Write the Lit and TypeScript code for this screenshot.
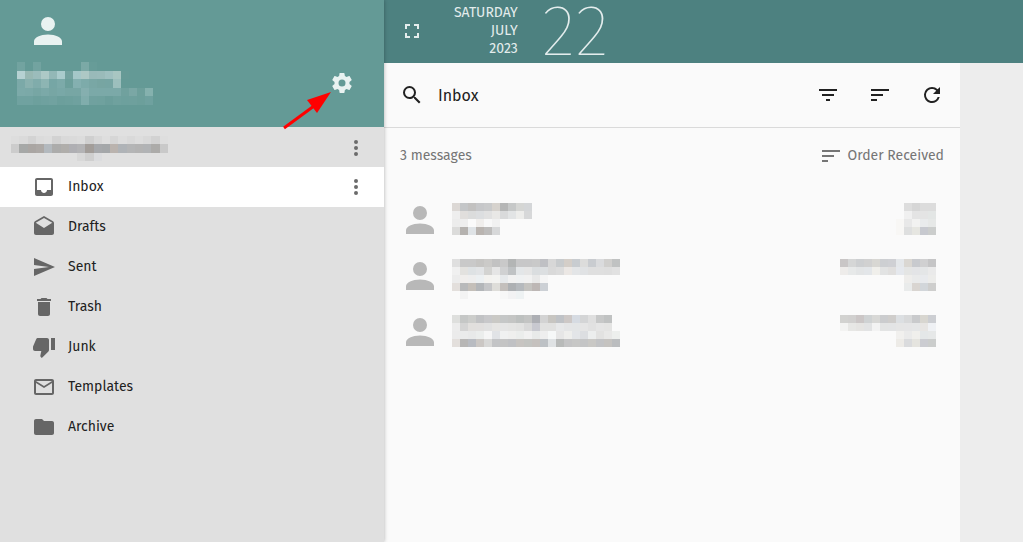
import { LitElement, html, svg, css } from "lit";
import { customElement, property, state } from "lit/decorators.js";

const ICONS: Record<string, string> = {
  account:
    "M12 4a4 4 0 1 1 0 8 4 4 0 0 1 0-8zM12 14c4.42 0 8 1.79 8 4v2H4v-2c0-2.21 3.58-4 8-4z",
  settings:
    "M12 15.5A3.5 3.5 0 0 1 8.5 12 3.5 3.5 0 0 1 12 8.5a3.5 3.5 0 0 1 3.5 3.5 3.5 3.5 0 0 1-3.5 3.5m7.43-2.53c.04-.32.07-.64.07-.97s-.03-.66-.07-1l2.11-1.63c.19-.15.24-.42.12-.64l-2-3.46c-.12-.22-.39-.31-.61-.22l-2.49 1c-.52-.39-1.06-.73-1.69-.98l-.37-2.65A.506.506 0 0 0 14 2h-4c-.25 0-.46.18-.5.42l-.37 2.65c-.63.25-1.17.59-1.69.98l-2.49-1c-.22-.09-.49 0-.61.22l-2 3.46c-.13.22-.07.49.12.64L4.57 11c-.04.34-.07.67-.07 1s.03.65.07.97l-2.11 1.66c-.19.15-.25.42-.12.64l2 3.46c.12.22.39.3.61.22l2.49-1.01c.52.4 1.06.74 1.69.99l.37 2.65c.04.24.25.42.5.42h4c.25 0 .46-.18.5-.42l.37-2.65c.63-.26 1.17-.59 1.69-.99l2.49 1.01c.22.08.49 0 .61-.22l2-3.46c.12-.22.07-.49-.12-.64z",
  more:
    "M12 8a2 2 0 1 0 0-4 2 2 0 0 0 0 4zm0 2a2 2 0 1 0 0 4 2 2 0 0 0 0-4zm0 6a2 2 0 1 0 0 4 2 2 0 0 0 0-4z",
  inbox:
    "M19 3H4.99C3.88 3 3.01 3.89 3.01 5L3 19c0 1.1.88 2 1.99 2H19c1.1 0 2-.9 2-2V5c0-1.11-.9-2-2-2zm0 12h-4c0 1.66-1.35 3-3 3s-3-1.34-3-3H4.99V5H19v10z",
  drafts:
    "M21.99 8c0-.72-.37-1.35-.94-1.7L12 1 2.95 6.3C2.38 6.65 2 7.28 2 8v10c0 1.1.9 2 2 2h16c1.1 0 2-.9 2-2l-.01-10zM12 13L3.74 7.84 12 3l8.26 4.84L12 13z",
  send: "M2.01 21L23 12 2.01 3 2 10l15 2-15 2z",
  trash:
    "M6 19c0 1.1.9 2 2 2h8c1.1 0 2-.9 2-2V7H6v12zM19 4h-3.5l-1-1h-5l-1 1H5v2h14V4z",
  junk:
    "M15 3H6c-.83 0-1.54.5-1.84 1.22l-3.02 7.05c-.09.23-.14.47-.14.73v2c0 1.1.9 2 2 2h6.31l-.95 4.57-.03.32c0 .41.17.79.44 1.06L9.83 23l6.59-6.59c.36-.36.58-.86.58-1.41V5c0-1.1-.9-2-2-2zm4 0v12h4V3h-4z",
  mail:
    "M20 4H4c-1.1 0-1.99.9-1.99 2L2 18c0 1.1.9 2 2 2h16c1.1 0 2-.9 2-2V6c0-1.1-.9-2-2-2zm0 14H4V8l8 5 8-5v10zm-8-7L4 6h16l-8 5z",
  folder:
    "M10 4H4c-1.1 0-1.99.9-1.99 2L2 18c0 1.1.9 2 2 2h16c1.1 0 2-.9 2-2V8c0-1.1-.9-2-2-2h-8l-2-2z",
  fullscreen:
    "M7 14H5v5h5v-2H7v-3zm-2-4h2V7h3V5H5v5zm12 7h-3v2h5v-5h-2v3zM14 5v2h3v3h2V5h-5z",
  search:
    "M15.5 14h-.79l-.28-.27A6.471 6.471 0 0 0 16 9.5 6.5 6.5 0 1 0 9.5 16c1.61 0 3.09-.59 4.23-1.57l.27.28v.79l5 4.99L20.49 19l-4.99-5zm-6 0C7.01 14 5 11.99 5 9.5S7.01 5 9.5 5 14 7.01 14 9.5 11.99 14 9.5 14z",
  filter: "M10 18h4v-2h-4v2zM3 6v2h18V6H3zm3 7h12v-2H6v2z",
  sort: "M3 18h6v-2H3v2zM3 6v2h18V6H3zm0 7h12v-2H3v2z",
  refresh:
    "M17.65 6.35A7.958 7.958 0 0 0 12 4a8 8 0 1 0 7.73 10h-2.08A5.99 5.99 0 0 1 12 18c-3.31 0-6-2.69-6-6s2.69-6 6-6c1.66 0 3.14.69 4.22 1.78L13 11h7V4l-2.35 2.35z",
};

@customElement("mail-icon")
class MailIcon extends LitElement {
  @property() name = "";

  static styles = css`
    :host {
      display: block;
      flex: none;
      width: 24px;
      height: 24px;
    }
    .glyph {
      display: block;
      width: 100%;
      height: 100%;
      fill: currentColor;
    }
  `;

  render() {
    return html`<svg class="glyph" viewBox="0 0 24 24" aria-hidden="true">
      ${svg`<path d=${ICONS[this.name] ?? ""}></path>`}
    </svg>`;
  }
}

/* Grid of tiles that stands in for redacted text; "-" leaves a tile empty.
   Tiles are 8px squares unless an overall width or height is given. */
@customElement("redacted-text")
class RedactedText extends LitElement {
  @property({ attribute: false }) rows: string[] = [];
  @property({ type: Number }) width = 0;
  @property({ type: Number }) height = 0;

  static styles = css`
    :host {
      display: block;
      flex: none;
    }
    .tiles {
      display: block;
      shape-rendering: crispEdges;
    }
  `;

  render() {
    const grid = this.rows.map((row) => row.split(" "));
    const columns = Math.max(...grid.map((row) => row.length));
    return html`<svg
      class="tiles"
      viewBox="0 0 ${columns} ${grid.length}"
      preserveAspectRatio="none"
      width=${this.width || columns * 8}
      height=${this.height || grid.length * 8}
      aria-hidden="true"
    >
      ${grid.map((row, y) =>
        row.map((tone, x) =>
          tone === "-"
            ? null
            : svg`<rect x=${x} y=${y} width="1" height="1" fill=${"#" + tone}></rect>`
        )
      )}
    </svg>`;
  }
}

const PROFILE = [
  "72a3a0 - 72a3a0 - - - - - 7ba9a6 679c98",
  "b6d1d2 98b8b3 9bbcbb adc9c6 93b8b7 aacbcc 73a29f a5c7c8 adc8c5 99bab9 9abbba 9fc0c0 a8c6c2 669a96",
  "7ba9a8 89b1af 80acab 8db5b3 76a6a5 7caaa9 6c9f9b 84b0b0 7dabaa 79a7a5 77a5a2 76a5a3 9cbfbd",
  "7caaa9 7ba9a8 77a6a4 7ba9a8 77a6a4 79a8a7 77a6a4 77a6a4 85afaf 7ba9a8 7ba9a8 7ba9a8 7ba9a8 70a19e 7aa7a5 6d9f9b 85b1ae",
  "70a2a0 70a2a0 6da09d 6fa19f 71a2a0 6c9f9c 6da09d 6fa19f 80adac 70a19f 6fa19e 6b9e9b 6fa19e 6da09d 6ea09d 6c9f9b 6fa19f",
];

const ACCOUNT = [
  "dddddd dadada d3d3d3 dbdbdb dddddd d2d2d2 d9d9d9 dadada dcdcdc cfcfcf d8d8d8 dedede d6d6d6 dddddd d9d9d9 dddddd d9d9d9 d2d2d2 dedede",
  "cccccc a6a8a7 aaa6a3 ada9a6 b3b9be acacab b0aeab afafb3 b3b3b5 a29d99 a6a8ab a4a7a9 bab3ae afb3b7 b4b5b6 b3b3b3 b1b3b5 acaba9 c9c9c9",
  "- - - - - - - - d8d8d8 cfcfcf dbdcde",
];

interface Message {
  from: string[];
  date: string[];
}

const MESSAGES: Message[] = [
  {
    from: [
      "dcd8d5 c4c6c8 c2c1c0 c6c7c9 c9cacb d6d2cd b5b6b6 c6c8c8 d5d6d4 d4d6d8",
      "eeeeee e0dedc dbdcdc dcdee0 e1e1e1 e9e8e6 d9dadb e2e4e5 ededeb d7d8d9",
      "ececec eeeeee - f0eeec f8f8f8 f1f1f1",
      "dbdbda b5b2af dfe3e6 b9b4b0 bdbcbb d7d8d9",
    ],
    date: [
      "- dddddd d6d6d6 dcdcdc dcdcdc",
      "- f0f0f0 e4e4e4 e4e4e4 e3e6e5",
      "f8f7f5 e8e8e8 f2f2f1 e9ebec e6e8e7",
      "f8f7f5 dedfdf e6e6e1 c7c9cf cbcdcc",
    ],
  },
  {
    from: [
      "dfdfdf c9c9c9 c9c9c9 c6c5c3 cbcac8 c2c2c2 c9c9c9 b3b5b5 c7c7c8 c7c7c8 c9c9c9 bfc0c4 d7d7d7 c8cbcd d4cec8 c8ccd0 dcdcdb c9ccd0 dadbdd d0cfcd c0c2c2",
      "f0f0f0 e3e2df dee2e4 e2e4e6 d3d3d1 e5e5e5 d0d1d2 bfc2c4 e3e6e8 e5e5e5 dadddf dcdfe1 d9d9d9 dcdcdc ebe7e4 e3e5e7 e0e2e4 dfdfdf dfdfdf dedede e1e1e1",
      "ececec f0eeec eeeeee ecf0f2 f3f2ef f3f3f1 e6e9eb f1f1f1 eff1f2 f1f1f1 e8e8e8 f5f5f5",
      "e3dfdc b8b9ba c4bfb9 b3b6b9 c5c6c8 deddd9 c3bfbc adb0b3 b5b9bd c4c3c0 bdb7b5 ccd0d5",
      "- f3f3f3 - - - - f7f7f7 f2f2f3 eef2f3",
    ],
    date: [
      "c9c6c6 d5d6d6 cdcfd1 d1d1d1 d8d7d3 cdcfd2 cfd0d4 e4e7ea dad7d2 c8cace d0d0d1 c5c5c6",
      "eeecea e7e9e9 e3e5e6 e3e6e9 f0efeb e2e3e3 e0dfde e5e8ed e4e5e4 e3e4e6 e4e6e7 eaeaea",
      "- - - - - - - - eeedeb e9eaea e8eaed ececea",
      "- - - - - - - - e9ebeb d9d5d1 d2d6da cececd",
    ],
  },
  {
    from: [
      "dedfdd c5c7c6 cccdcb c1c2c4 c8c8ca cac9c5 c5c7c7 c4c5c4 bdc0bf c3c4c3 adafb4 d3d3d3 c7c5c1 bfc2c6 cdc8c6 d6dbe2 d4d5d6 dfdfdf c7c8c8 c0c2c2",
      "ececec d4d4d4 e1dfdd e1dfde e1e1e1 e6e5e3 e5e5e5 e4e4e3 e2e2e1 d9d9d9 c8c9d0 e1e1e0 e1e1e0 e7e8e9 e4e5e6 e3e5e6 e5e5e5 e1e1e1 e5e5e5 e4e4e3",
      "ebebeb eaebeb e8e9e9 ebedec f5f5f5 e1e3e6 f0f1f1 efefee ebedec f1f1f1 e8eae9 eeeeee f6f8f8 e6e6e6 eeeeec e3e5e8 dcdee1 eceeee e2e2e1 e8e8e7 edefed",
      "e3dfdc b7b6b5 b8bbc1 cbc7c4 d8d8d7 c3c4c6 c4c4c4 c0c1c4 c7c4c1 c3c4c1 c5c1be bdc1c5 dfe2e4 b8bab9 c4c4c5 c7c7c6 c4c5c6 c9c8c5 c2c3c5 c5c3c0 bbbdbf",
    ],
    date: [
      "d2d2d0 d1d0cf cbc6c6 cfd2d3 d8d8d6 cbccce cfcdcb dcdfe2 d8d9da c9cacc d8d6d0 ccced2",
      "f3f3f2 e7e7e5 e5e4e2 e2e3e4 f3f3f3 e3e4e4 e3e4e5 e5e5e5 e5e5e6 e5e6e7 e7e5e3 eff1f4",
      "- - - - - - - f1f0ee eaeaea f0efec e4e7e8 e6e8e8",
      "- - - - - - - edebe7 dadbdd e5e4df cbccd1 cbcdcc",
    ],
  },
];

const FOLDERS = [
  { name: "Inbox", icon: "inbox" },
  { name: "Drafts", icon: "drafts" },
  { name: "Sent", icon: "send" },
  { name: "Trash", icon: "trash" },
  { name: "Junk", icon: "junk" },
  { name: "Templates", icon: "mail" },
  { name: "Archive", icon: "folder" },
];

@customElement("app-root")
class AppRoot extends LitElement {
  @state() selected = "Inbox";

  static styles = css`
    :host {
      display: flex;
      min-height: 100vh;
      font: 14px/20px "Fira Sans", "Noto Sans", sans-serif;
      color: #212121;
      background: #ededed;
    }
    button {
      display: block;
      flex: none;
      margin: 0;
      padding: 0;
      border: 0;
      background: none;
      color: inherit;
      font: inherit;
      cursor: pointer;
    }
    .sidebar {
      position: relative;
      z-index: 1;
      flex: none;
      width: 384px;
      background: #e0e0e0;
      box-shadow: 0 0 4px rgba(0, 0, 0, 0.3);
    }
    .profile {
      box-sizing: border-box;
      height: 127px;
      padding: 10px 30px 0 17px;
      background: #649a96;
      color: #e9f2f1;
    }
    .portrait {
      width: 42px;
      height: 42px;
      margin-left: 10px;
    }
    .identity {
      display: flex;
      justify-content: space-between;
      align-items: center;
      height: 44px;
      padding-top: 9px;
    }
    .pointer {
      position: absolute;
      left: 280px;
      top: 88px;
      width: 56px;
      height: 44px;
      pointer-events: none;
    }
    .account {
      box-sizing: border-box;
      display: flex;
      justify-content: space-between;
      align-items: center;
      height: 40px;
      padding: 2px 16px 0 11px;
    }
    .menu {
      color: #6b6b6b;
    }
    .folders {
      margin: 0;
      padding: 0;
      list-style: none;
    }
    .folder {
      display: flex;
      align-items: center;
      height: 40px;
      padding-right: 16px;
    }
    .folder.current {
      background: #fff;
    }
    .folder-link {
      display: flex;
      flex: 1;
      align-items: center;
      gap: 12px;
      padding-left: 32px;
      color: inherit;
      text-decoration: none;
    }
    .folder-icon {
      color: #666;
    }
    .workspace {
      flex: 1;
      min-width: 0;
      display: flex;
      flex-direction: column;
    }
    .banner {
      box-sizing: border-box;
      display: flex;
      align-items: center;
      height: 63px;
      padding: 0 0 1px 16px;
      background: #4d8180;
      color: #e4eded;
    }
    .date {
      display: flex;
      align-items: center;
      gap: 24px;
      padding-left: 30px;
    }
    .calendar {
      line-height: 18px;
      text-align: right;
      text-transform: uppercase;
    }
    .day {
      font: 100 72px/62px "Fira Sans", Lato, sans-serif;
    }
    .list {
      flex: 1;
      box-sizing: border-box;
      width: 576px;
      max-width: 100%;
      background: #fafafa;
    }
    .toolbar {
      display: flex;
      align-items: center;
      height: 64px;
      padding: 0 16px;
      border-bottom: 1px solid #dadada;
    }
    .title {
      flex: 1;
      margin: 0;
      padding: 2px 0 0 14px;
      font-size: 16px;
      font-weight: 400;
    }
    .actions {
      display: flex;
      gap: 28px;
    }
    .summary {
      display: flex;
      justify-content: space-between;
      align-items: center;
      height: 55px;
      padding: 0 16px;
      color: #757575;
    }
    .order {
      display: flex;
      align-items: center;
      gap: 4px;
    }
    .messages {
      margin: 0;
      padding: 8px 24px 0 15px;
      list-style: none;
    }
    .message {
      display: flex;
      align-items: flex-start;
      height: 48px;
      padding-top: 8px;
    }
    .avatar {
      width: 42px;
      height: 42px;
      color: #b8b8b8;
    }
    .excerpt {
      display: flex;
      flex: 1;
      justify-content: space-between;
      padding: 4px 0 0 11px;
    }
  `;

  private pick(event: Event, name: string) {
    event.preventDefault();
    this.selected = name;
  }

  render() {
    return html`
      <aside class="sidebar">
        <div class="profile">
          <mail-icon class="portrait" name="account"></mail-icon>
          <div class="identity">
            <redacted-text .rows=${PROFILE} height="43"></redacted-text>
            <button aria-label="Settings"><mail-icon name="settings"></mail-icon></button>
          </div>
        </div>
        <div class="account">
          <redacted-text .rows=${ACCOUNT} width="157" height="25"></redacted-text>
          <button class="menu" aria-label="Account menu"><mail-icon name="more"></mail-icon></button>
        </div>
        <nav aria-label="Folders">
          <ul class="folders">
            ${FOLDERS.map(
              ({ name, icon }) => html`<li class="folder ${name === this.selected ? "current" : ""}">
                <a class="folder-link" href="#${name}" @click=${(e: Event) => this.pick(e, name)}>
                  <mail-icon class="folder-icon" name=${icon}></mail-icon>
                  <span>${name}</span>
                </a>
                ${name === this.selected
                  ? html`<button class="menu" aria-label="Folder menu"><mail-icon name="more"></mail-icon></button>`
                  : null}
              </li>`
            )}
          </ul>
        </nav>
        <svg class="pointer" viewBox="0 0 56 44" aria-hidden="true">
          <path d="M4 40L34 18" stroke="#f00" stroke-width="3" fill="none"></path>
          <path d="M51 4L27 12L37 25Z" fill="#f00"></path>
        </svg>
      </aside>
      <main class="workspace">
        <header class="banner">
          <button aria-label="Full screen"><mail-icon name="fullscreen"></mail-icon></button>
          <div class="date">
            <div class="calendar">
              <div>Saturday</div>
              <div>July</div>
              <div>2023</div>
            </div>
            <div class="day">22</div>
          </div>
        </header>
        <section class="list">
          <div class="toolbar">
            <button aria-label="Search"><mail-icon name="search"></mail-icon></button>
            <h1 class="title">Inbox</h1>
            <div class="actions">
              <button aria-label="Filter"><mail-icon name="filter"></mail-icon></button>
              <button aria-label="Sort"><mail-icon name="sort"></mail-icon></button>
              <button aria-label="Refresh"><mail-icon name="refresh"></mail-icon></button>
            </div>
          </div>
          <div class="summary">
            <span>3 messages</span>
            <button class="order"><mail-icon name="sort"></mail-icon>Order Received</button>
          </div>
          <ul class="messages">
            ${MESSAGES.map(
              (message) => html`<li class="message">
                <mail-icon class="avatar" name="account"></mail-icon>
                <div class="excerpt">
                  <redacted-text .rows=${message.from}></redacted-text>
                  <redacted-text .rows=${message.date}></redacted-text>
                </div>
              </li>`
            )}
          </ul>
        </section>
      </main>
    `;
  }
}
